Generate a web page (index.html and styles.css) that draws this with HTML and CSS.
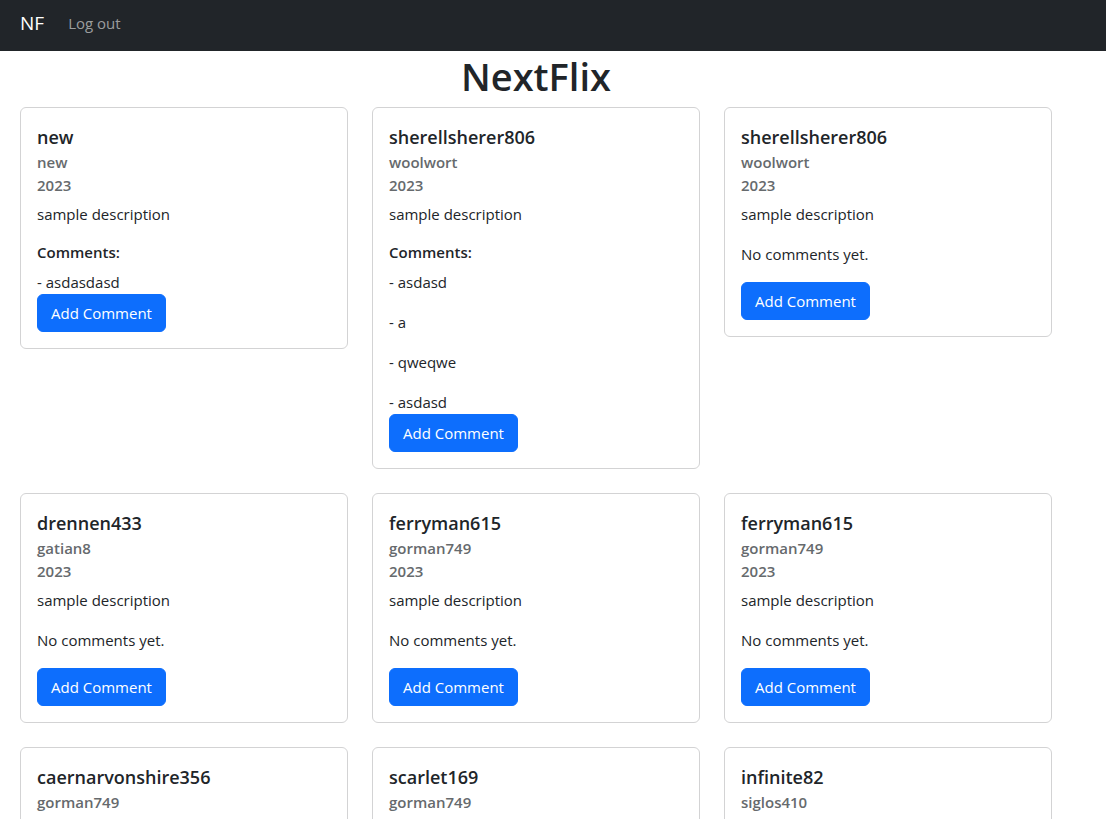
FILE: index.html
```html
<!DOCTYPE html>
<html lang="en">
<head>
<meta charset="utf-8">
<meta name="viewport" content="width=device-width, initial-scale=1">
<title>NextFlix</title>
<link rel="stylesheet" href="styles.css">
</head>
<body>
<nav class="navbar">
  <a class="brand" href="#">NF</a>
  <a class="nav-link" href="#">Log out</a>
</nav>
<main class="page">
  <h1 class="title">NextFlix</h1>
  <div class="grid">
    <article class="card">
      <h2 class="card-title">new</h2>
      <h3 class="card-sub">new</h3>
      <h3 class="card-sub year">2023</h3>
      <p class="text">sample description</p>
      <h4 class="comments-title">Comments:</h4>
      <ul class="comments"><li>- asdasdasd</li></ul>
      <button class="btn" type="button">Add Comment</button>
    </article>
    <article class="card">
      <h2 class="card-title">sherellsherer806</h2>
      <h3 class="card-sub">woolwort</h3>
      <h3 class="card-sub year">2023</h3>
      <p class="text">sample description</p>
      <h4 class="comments-title">Comments:</h4>
      <ul class="comments"><li>- asdasd</li><li>- a</li><li>- qweqwe</li><li>- asdasd</li></ul>
      <button class="btn" type="button">Add Comment</button>
    </article>
    <article class="card">
      <h2 class="card-title">sherellsherer806</h2>
      <h3 class="card-sub">woolwort</h3>
      <h3 class="card-sub year">2023</h3>
      <p class="text">sample description</p>
      <p class="text">No comments yet.</p>
      <button class="btn" type="button">Add Comment</button>
    </article>
    <article class="card">
      <h2 class="card-title">drennen433</h2>
      <h3 class="card-sub">gatian8</h3>
      <h3 class="card-sub year">2023</h3>
      <p class="text">sample description</p>
      <p class="text">No comments yet.</p>
      <button class="btn" type="button">Add Comment</button>
    </article>
    <article class="card">
      <h2 class="card-title">ferryman615</h2>
      <h3 class="card-sub">gorman749</h3>
      <h3 class="card-sub year">2023</h3>
      <p class="text">sample description</p>
      <p class="text">No comments yet.</p>
      <button class="btn" type="button">Add Comment</button>
    </article>
    <article class="card">
      <h2 class="card-title">ferryman615</h2>
      <h3 class="card-sub">gorman749</h3>
      <h3 class="card-sub year">2023</h3>
      <p class="text">sample description</p>
      <p class="text">No comments yet.</p>
      <button class="btn" type="button">Add Comment</button>
    </article>
    <article class="card">
      <h2 class="card-title">caernarvonshire356</h2>
      <h3 class="card-sub">gorman749</h3>
      <h3 class="card-sub year">2023</h3>
      <p class="text">sample description</p>
      <p class="text">No comments yet.</p>
      <button class="btn" type="button">Add Comment</button>
    </article>
    <article class="card">
      <h2 class="card-title">scarlet169</h2>
      <h3 class="card-sub">gorman749</h3>
      <h3 class="card-sub year">2023</h3>
      <p class="text">sample description</p>
      <p class="text">No comments yet.</p>
      <button class="btn" type="button">Add Comment</button>
    </article>
    <article class="card">
      <h2 class="card-title">infinite82</h2>
      <h3 class="card-sub">siglos410</h3>
      <h3 class="card-sub year">2023</h3>
      <p class="text">sample description</p>
      <p class="text">No comments yet.</p>
      <button class="btn" type="button">Add Comment</button>
    </article>
  </div>
</main>
</body>
</html>
```

FILE: styles.css
```css
* { box-sizing: border-box; margin: 0; }
html { scrollbar-width: none; }
body {
  font-family: "Segoe UI", "Open Sans", "Noto Sans", sans-serif;
  font-size: 15px;
  line-height: 24px;
  color: #212529;
  background: #fff;
}
.navbar {
  display: flex;
  align-items: center;
  gap: 24px;
  padding: 8px 20px 13px;
  background: #212529;
}
.brand, .nav-link { text-decoration: none; }
.brand { font-size: 19px; line-height: 30px; color: #fff; }
.nav-link { color: #9b9d9e; }
.page { padding: 0 54px 24px 20px; }
.title {
  margin-bottom: 6px;
  font-size: 38px;
  line-height: 50px;
  font-weight: 600;
  text-align: center;
}
.grid {
  display: grid;
  grid-template-columns: repeat(3, minmax(0, 1fr));
  gap: 24px;
  align-items: start;
}
.card {
  padding: 16px;
  border: 1px solid #d3d3d4;
  border-radius: 6px;
}
.card-title {
  margin-bottom: 1px;
  font-size: 18px;
  line-height: 26px;
  font-weight: 600;
}
.card-sub {
  font-size: 15px;
  line-height: 23px;
  font-weight: 600;
  color: #666a6d;
}
.year { margin-bottom: 5px; }
.text { margin-bottom: 16px; }
.comments-title {
  margin-bottom: 8px;
  font-size: 15px;
  line-height: 20px;
  font-weight: 600;
}
.comments {
  display: grid;
  gap: 16px;
  padding: 0;
  list-style: none;
}
.btn {
  display: block;
  padding: 6px 13px;
  border: 1px solid #0d6efd;
  border-radius: 6px;
  background: #0d6efd;
  color: #fff;
  font: inherit;
  cursor: pointer;
}
```
